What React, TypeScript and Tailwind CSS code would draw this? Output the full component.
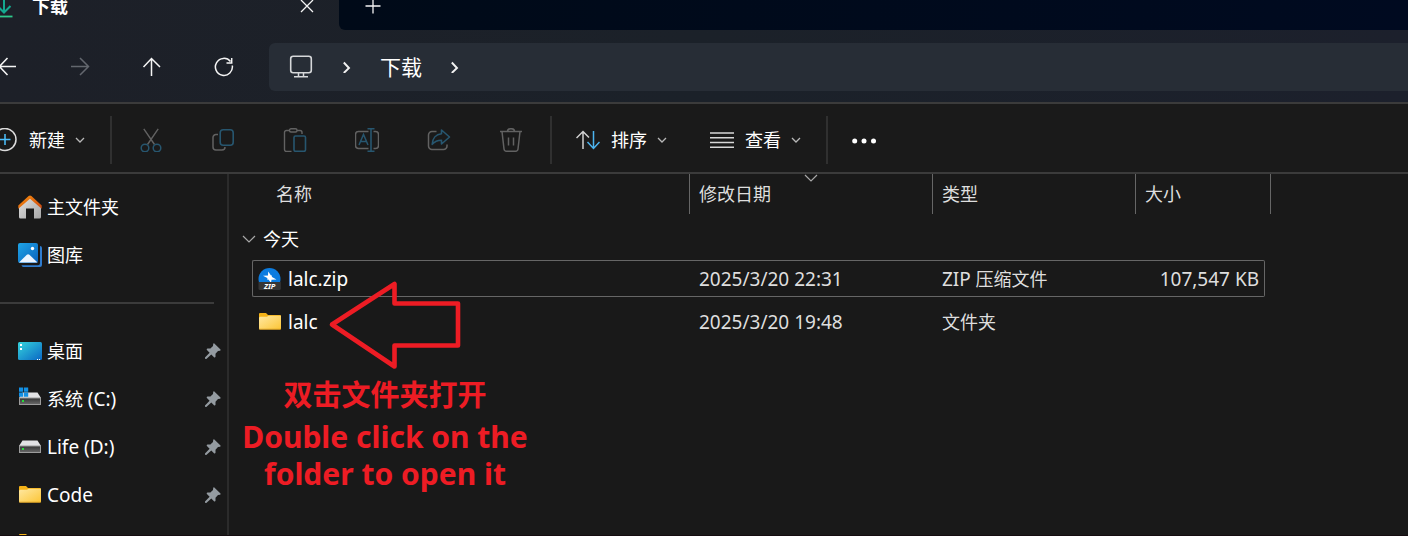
import type { ReactNode } from "react";

const FONT = "font-['Noto_Sans','Noto_Sans_CJK_SC',sans-serif]";

function Svg({ children, className = "size-6", box = "0 0 24 24" }: { children: ReactNode; className?: string; box?: string }) {
  return (
    <svg viewBox={box} fill="none" aria-hidden="true" className={`shrink-0 ${className}`}>
      {children}
    </svg>
  );
}

/* ---------- icons ---------- */

const DownloadIcon = () => (
  <Svg>
    <path d="M12 1V18.500M5.500 12L12 18.500L18.500 12" stroke="#14a98f" strokeWidth="2" />
    <path d="M3.500 22.500H20.500" stroke="#2fc98c" strokeWidth="1.800" />
  </Svg>
);

const SmallChevron = () => (
  <Svg className="size-3" box="0 0 12 12">
    <path d="M2 4L6 8L10 4" stroke="#b8b8b8" strokeWidth="1.300" />
  </Svg>
);

const WideChevron = () => (
  <Svg className="h-2 w-3.5" box="0 0 14 8">
    <path d="M1 1L7 7L13 1" stroke="#a8a8a8" strokeWidth="1.200" />
  </Svg>
);

const CrumbChevron = () => (
  <Svg className="size-3" box="0 0 12 12">
    <path d="M2.800 1.500L8 7L2.800 12" stroke="#f2f2f2" strokeWidth="1.900" />
  </Svg>
);

const MonitorIcon = () => (
  <Svg>
    <rect x="1.700" y="1.200" width="20.600" height="16.600" rx="2.500" stroke="#d6d8da" strokeWidth="1.600" />
    <path d="M9.500 18V21M14.500 18V21M5 21.700H19" stroke="#d6d8da" strokeWidth="1.500" />
  </Svg>
);

const GREY = "#626262";
const BLUE = "#27566f";

const CutIcon = () => (
  <Svg>
    <path d="M4.800 0.800L15.500 16.500M19.200 0.800L8.500 16.500" stroke={GREY} strokeWidth="1.400" />
    <circle cx="6" cy="20" r="3.800" stroke={BLUE} strokeWidth="1.500" />
    <circle cx="18" cy="20" r="3.800" stroke={BLUE} strokeWidth="1.500" />
  </Svg>
);

const CopyIcon = () => (
  <Svg>
    <path d="M7 6.500H5a3 3 0 0 0-3 3V19a3 3 0 0 0 3 3H11a3 3 0 0 0 3-3" stroke={GREY} strokeWidth="1.500" />
    <rect x="9.200" y="1.800" width="13" height="15.500" rx="3" stroke={BLUE} strokeWidth="1.600" />
  </Svg>
);

const PasteIcon = () => (
  <Svg>
    <path d="M7 2.500H3.500a2 2 0 0 0-2 2V21.500a2 2 0 0 0 2 2H8.500M14 2.500H17a2 2 0 0 1 2 2V6" stroke={GREY} strokeWidth="1.400" />
    <rect x="6.500" y="0.800" width="7.500" height="3.200" rx="1.500" stroke={GREY} strokeWidth="1.400" />
    <rect x="11" y="8" width="11.500" height="15.300" rx="1.500" stroke={BLUE} strokeWidth="1.600" />
  </Svg>
);

const RenameIcon = () => (
  <Svg>
    <path d="M13.500 3.500H3.500a3 3 0 0 0-3 3V17.500a3 3 0 0 0 3 3H13.500M18.500 3.500H20.500a3 3 0 0 1 3 3V17.500a3 3 0 0 1-3 3H18.500" stroke={GREY} strokeWidth="1.500" />
    <path d="M12.500 0.800H19.500M12.500 23.200H19.500M16 1V23" stroke={BLUE} strokeWidth="1.600" />
    <path d="M4 17L8.500 6.500L13 17M5.500 13.500H11.500" stroke={BLUE} strokeWidth="1.500" />
  </Svg>
);

const ShareIcon = () => (
  <Svg>
    <path d="M9.500 3.500H5a3.500 3.500 0 0 0-3.500 3.500V18a3.500 3.500 0 0 0 3.500 3.500H16.500a3.500 3.500 0 0 0 3.500-3.500V16.500" stroke={GREY} strokeWidth="1.500" />
    <path d="M14.500 2L22.500 9L14.500 16V12.200C10.500 12.200 7.500 13.500 5.200 16.300C5.500 10.500 9 6.300 14.500 5.800Z" stroke={BLUE} strokeWidth="1.600" strokeLinejoin="round" />
  </Svg>
);

const TrashIcon = () => (
  <Svg>
    <path d="M1 3.500H23M8.500 3.500a3.500 2.800 0 0 1 7 0M3 3.500L5 21a2.500 2.500 0 0 0 2.400 2.200H16.600A2.500 2.500 0 0 0 19 21L21 3.500M9.500 9.500V17.500M14.500 9.500V17.500" stroke={GREY} strokeWidth="1.500" />
  </Svg>
);

const HomeIcon = () => (
  <Svg>
    <defs>
      <linearGradient id="wall" x1="0" y1="0" x2="1" y2="1">
        <stop offset="0" stopColor="#e3e3e3" />
        <stop offset="1" stopColor="#a6a6a6" />
      </linearGradient>
      <linearGradient id="roof" x1="0" y1="0" x2="1" y2="1">
        <stop offset="0" stopColor="#f78f0c" />
        <stop offset="1" stopColor="#cf4a14" />
      </linearGradient>
    </defs>
    <path d="M1 11L12 1.500L23 11V22a1.500 1.500 0 0 1-1.500 1.500H16V13.500H8V23.500H2.500A1.500 1.500 0 0 1 1 22Z" fill="url(#wall)" />
    <path d="M0.300 10.500L10.600 1.100a2 2 0 0 1 2.800 0L23.700 10.500V13.800L12 3.800L0.300 13.800Z" fill="url(#roof)" />
  </Svg>
);

const GalleryIcon = () => (
  <Svg>
    <defs>
      <linearGradient id="photo" x1="0" y1="0" x2="1" y2="1">
        <stop offset="0" stopColor="#1ea4e6" />
        <stop offset="1" stopColor="#0a62bd" />
      </linearGradient>
    </defs>
    <path d="M22 3a2 2 0 0 1 2 2V22a2 2 0 0 1-2 2H5.500a2 2 0 0 1-2-1.800H20a2 2 0 0 0 2-2Z" fill="#2f7ccf" />
    <rect width="20" height="20" rx="2" fill="url(#photo)" />
    <path d="M1 19.500L8.800 11.700a2 2 0 0 1 2.600 0L19.500 19.500Z" fill="#edf5ff" />
    <circle cx="14.500" cy="5.500" r="1.700" fill="#fff" />
  </Svg>
);

const DesktopIcon = () => (
  <Svg>
    <defs>
      <linearGradient id="desk" x1="0" y1="0" x2="1" y2="1">
        <stop offset="0" stopColor="#35d3dc" />
        <stop offset="1" stopColor="#0a67c4" />
      </linearGradient>
    </defs>
    <rect y="3" width="24" height="18" rx="1.500" fill="url(#desk)" />
    <path d="M2 5H4V7H2ZM2 9H4V11H2ZM19 20H20V21H19ZM21 20H22V21H21Z" fill="#fff" />
  </Svg>
);

const DriveIcon = ({ system = false }: { system?: boolean }) => (
  <Svg>
    <defs>
      <linearGradient id="drive" x1="0" y1="0" x2="0" y2="1">
        <stop offset="0" stopColor="#333" />
        <stop offset="1" stopColor="#6b6b6b" />
      </linearGradient>
    </defs>
    <path d="M4.500 5.500H19.500L23 11H1Z" fill="#e2e2e4" />
    <rect x="1.500" y="11" width="21" height="6.500" fill="url(#drive)" stroke="#9c9c9c" />
    <rect x="4" y="13" width="2" height="2" fill="#27dc3a" />
    {system && <path d="M1 0.500H5.200V4.700H1ZM6 0.500H10.200V4.700H6ZM1 5.500H5.200V9.700H1ZM6 5.500H10.200V9.700H6Z" fill="#1390e4" />}
  </Svg>
);

const FolderIcon = () => (
  <Svg>
    <defs>
      <linearGradient id="folder" x1="0" y1="0" x2="1" y2="1">
        <stop offset="0" stopColor="#ffe8a2" />
        <stop offset="1" stopColor="#fcc535" />
      </linearGradient>
    </defs>
    <path d="M1 4a1 1 0 0 1 1-1H8L10 5H22a1 1 0 0 1 1 1V9H1Z" fill="#f4b217" />
    <path d="M1 8a1.500 1.500 0 0 1 1.500-1.200H9L10.500 5.800H23V18.500a1 1 0 0 1-1 1H2a1 1 0 0 1-1-1Z" fill="url(#folder)" />
    <path d="M1.300 19.200H22.700" stroke="#dfa01c" strokeWidth="0.800" />
  </Svg>
);

const ZipIcon = () => (
  <Svg>
    <circle cx="11.500" cy="12" r="11" fill="#0b7ce0" />
    <path d="M10.200 4.500L13 8.500L13.500 8L14 10L18.500 12.500L13.500 12.700L13 16L10.500 12.500L9.500 13L9.300 11L5 8.800L10 8.600Z" fill="#fff" />
    <path d="M0.500 15H22.800V21.500a1.500 1.500 0 0 1-1.500 1.500H2A1.500 1.500 0 0 1 0.500 21.500Z" fill="#363636" />
    <text x="11.700" y="21.700" textAnchor="middle" fontSize="7.500" fontStyle="italic" fontWeight="700" fill="#fff">ZIP</text>
  </Svg>
);

const PinIcon = () => (
  <Svg className="size-4" box="0 0 16 16">
    <path d="M9.300 0.500L15.500 6.500C15.800 7 15.500 7.600 15 7.700L13 8L10.500 10.700V13.800C10.300 14.500 9.500 14.700 9 14.200L6.300 11.500L1.300 16L0 15.800V14.600L4.600 9.800L1.900 7C1.500 6.400 1.800 5.700 2.500 5.600H5.400L8 3L8.200 1C8.300 0.400 8.900 0.200 9.300 0.500Z" fill="#949ba1" />
  </Svg>
);

/* ---------- pieces ---------- */

function NavButton({ label, disabled, children }: { label: string; disabled?: boolean; children: ReactNode }) {
  return (
    <button type="button" aria-label={label} disabled={disabled} className="flex h-12 w-[72px] shrink-0 items-center justify-center">
      <Svg className="size-5" box="0 0 20 20">
        <g stroke={disabled ? "#63676e" : "#f5f5f5"} strokeWidth="1.500">{children}</g>
      </Svg>
    </button>
  );
}

function Divider() {
  return <div className="h-12 w-0.5 shrink-0 bg-[#303030]" />;
}

function ToolButton({ label, children }: { label: string; children: ReactNode }) {
  return (
    <button type="button" aria-label={label} disabled className="flex h-12 w-[72px] items-center justify-center">
      {children}
    </button>
  );
}

function Latin({ children }: { children: ReactNode }) {
  return <span className="text-[19px]">{children}</span>;
}

function SideItem({ icon, pinned, children }: { icon: ReactNode; pinned?: boolean; children: ReactNode }) {
  return (
    <li>
      <a href="#" className="flex h-12 items-center gap-[5px] pr-1.5 pl-[18px] text-[18px] whitespace-nowrap text-white">
        {icon}
        <span className="flex-1">{children}</span>
        {pinned && <PinIcon />}
      </a>
    </li>
  );
}

type Entry = { name: string; icon: ReactNode; date: string; type: ReactNode; size: string; focused: boolean };

const entries: Entry[] = [
  { name: "lalc.zip", icon: <ZipIcon />, date: "2025/3/20 22:31", type: <><Latin>ZIP</Latin> 压缩文件</>, size: "107,547 KB", focused: true },
  { name: "lalc", icon: <FolderIcon />, date: "2025/3/20 19:48", type: "文件夹", size: "", focused: false },
];

function EntryRow({ entry }: { entry: Entry }) {
  const edge = entry.focused ? "border-[#666]" : "border-transparent";
  return (
    <tr className="h-[37px] text-[#dedede]">
      <td />
      <td className={`rounded-l-xs border-y border-l p-0 pl-[5px] ${edge}`}>
        <div className="flex items-center gap-1.5 text-[19px] leading-6 text-white">
          {entry.icon}
          {entry.name}
        </div>
      </td>
      <td className={`border-y p-0 pl-[9px] text-[19px] leading-6 ${edge}`}>{entry.date}</td>
      <td className={`border-y p-0 pl-[9px] text-[18px] leading-6 ${edge}`}>{entry.type}</td>
      <td className={`rounded-r-xs border-y border-r p-0 pr-[5px] text-right text-[19px] leading-6 ${edge}`}>{entry.size}</td>
      <td />
    </tr>
  );
}

function Note() {
  return (
    <div className="pointer-events-none absolute top-[106px] left-3 w-72 text-center font-bold text-[#ed1c24]">
      <svg viewBox="0 0 140 92" fill="none" aria-hidden="true" className="ml-[86px] h-[92px] w-[140px]">
        <path d="M5 44.500L67.500 4V23.500H131V65.500H67.500V86.500Z" stroke="#ed1c24" strokeWidth="4.600" strokeLinejoin="round" />
      </svg>
      <p className="text-[29px] leading-[46px]">双击文件夹打开</p>
      <p className="text-[30px] leading-[37px] whitespace-nowrap">
        Double click on the
        <br />
        folder to open it
      </p>
    </div>
  );
}

export default function App() {
  return (
    <div className={`flex h-screen flex-col overflow-hidden border-b border-[#150c10] bg-[#191919] text-white ${FONT}`}>
      <header className="shrink-0 border-b-2 border-[#3b3b3b] bg-linear-to-r from-[#1d2028] via-[#1b2129] to-[#1c202c]">
        <div className="flex h-[30px]">
          <div className="-mt-[18px] -ml-2 flex h-12 w-[347px] shrink-0 items-center pr-6">
            <DownloadIcon />
            <span className="ml-4 flex-1 text-[18px] font-bold">下载</span>
            <button type="button" aria-label="关闭标签页" className="flex size-4 items-center justify-center">
              <Svg className="size-4" box="0 0 16 16">
                <path d="M2 2L14 14M14 2L2 14" stroke="#f5f5f5" strokeWidth="1.300" />
              </Svg>
            </button>
          </div>
          <div className="flex-1 rounded-bl-md bg-linear-to-r from-[#000a18] to-[#000a20]">
            <button type="button" aria-label="新标签页" className="-mt-[18px] ml-[26px] flex h-12 items-center">
              <Svg className="size-4" box="0 0 16 16">
                <path d="M8 0.500V15.500M0.500 8H15.500" stroke="#f5f5f5" strokeWidth="1.300" />
              </Svg>
            </button>
          </div>
        </div>
        <nav className="-ml-7 flex items-center pt-[13px] pb-[11px]" aria-label="导航">
          <NavButton label="后退"><path d="M18 9.500H1.500M9.500 1L1.500 9.500L9.500 18" /></NavButton>
          <NavButton label="前进" disabled><path d="M1 9.500H18.500M10 1L18.500 9.500L10 18" /></NavButton>
          <NavButton label="上移"><path d="M9.500 19V1.500M1.500 10L9.500 1.500L18 10" /></NavButton>
          <NavButton label="刷新"><path d="M16.500 4.500A8.500 8.500 0 1 0 18.300 8.500M17.700 1V6H12.500" /></NavButton>
          <div className="ml-[9px] flex h-12 flex-1 items-center rounded-l-md bg-[#272d36] pl-5 text-[21px]">
            <button type="button" aria-label="此电脑"><MonitorIcon /></button>
            <span className="ml-7"><CrumbChevron /></span>
            <button type="button" className="mx-[27px] pt-0.5">下载</button>
            <CrumbChevron />
          </div>
        </nav>
      </header>

      <div role="toolbar" aria-label="命令栏" className="flex h-[70px] shrink-0 items-center border-b-2 border-[#3b3b3b] bg-[#1a1a1a] pt-1 text-[18px] whitespace-nowrap">
        <button type="button" className="-ml-[7px] flex items-center pr-6">
          <Svg>
            <circle cx="12" cy="11.500" r="11" stroke="#dcdcdc" strokeWidth="1.500" />
            <path d="M12 6V17M6.500 11.500H17.500" stroke="#4cc2ff" strokeWidth="1.500" />
          </Svg>
          <span className="mr-[9px] ml-3">新建</span>
          <SmallChevron />
        </button>
        <Divider />
        <div className="mx-[3px] flex">
          <ToolButton label="剪切"><CutIcon /></ToolButton>
          <ToolButton label="复制"><CopyIcon /></ToolButton>
          <ToolButton label="粘贴"><PasteIcon /></ToolButton>
          <ToolButton label="重命名"><RenameIcon /></ToolButton>
          <ToolButton label="共享"><ShareIcon /></ToolButton>
          <ToolButton label="删除"><TrashIcon /></ToolButton>
        </div>
        <Divider />
        <button type="button" className="flex items-center pl-6">
          <Svg>
            <path d="M7 21V3.500M0.500 10L7 3.500L13 9.500" stroke="#d0d0d0" strokeWidth="1.500" />
            <path d="M17.500 3V20.500M11.500 14L17.500 20.500L23.500 14" stroke="#4cb4ef" strokeWidth="1.500" />
          </Svg>
          <span className="mr-[9px] ml-[11px]">排序</span>
          <SmallChevron />
        </button>
        <button type="button" className="flex items-center pr-6 pl-[42px]">
          <Svg>
            <path d="M0 5H24M0 9.700H24M0 14.500H24M0 19.300H24" stroke="#d8d8d8" strokeWidth="1.400" />
          </Svg>
          <span className="mr-[9px] ml-[11px]">查看</span>
          <SmallChevron />
        </button>
        <Divider />
        <button type="button" aria-label="更多" className="ml-6">
          <Svg>
            <g fill="#fff">
              <circle cx="2.700" cy="13" r="2.500" />
              <circle cx="12" cy="13" r="2.500" />
              <circle cx="21.500" cy="13" r="2.500" />
            </g>
          </Svg>
        </button>
      </div>

      <div className="flex min-h-0 flex-1">
        <aside className="w-[229px] shrink-0 overflow-hidden border-r-2 border-[#2b2b2b] pt-[9px]">
          <ul>
            <SideItem icon={<HomeIcon />}>主文件夹</SideItem>
            <SideItem icon={<GalleryIcon />}>图库</SideItem>
          </ul>
          <hr className="my-[23px] mr-[13px] border-t-2 border-[#3b3b3b]" />
          <ul>
            <SideItem icon={<DesktopIcon />} pinned>桌面</SideItem>
            <SideItem icon={<DriveIcon system />} pinned>系统 <Latin>(C:)</Latin></SideItem>
            <SideItem icon={<DriveIcon />} pinned><Latin>Life (D:)</Latin></SideItem>
            <SideItem icon={<FolderIcon />} pinned><Latin>Code</Latin></SideItem>
            <SideItem icon={<FolderIcon />} pinned>{""}</SideItem>
          </ul>
        </aside>

        <main className="relative min-w-0 flex-1 overflow-hidden">
          <table className="w-[1042px] table-fixed border-separate border-spacing-0 text-left">
            <colgroup>
              <col className="w-[23px]" />
              <col className="w-[438px]" />
              <col className="w-[243px]" />
              <col className="w-[203px]" />
              <col className="w-[129px]" />
              <col className="w-[6px]" />
            </colgroup>
            <thead>
              <tr className="h-10 text-[18px] leading-6 text-[#dedede]">
                <th colSpan={2} className="border-r border-[#666] p-0 pl-[47px] font-normal">名称</th>
                <th className="relative border-r border-[#666] p-0 pl-[9px] font-normal">
                  修改日期
                  <span className="absolute inset-x-0 top-0 flex justify-center"><WideChevron /></span>
                </th>
                <th className="border-r border-[#666] p-0 pl-[9px] font-normal">类型</th>
                <th colSpan={2} className="border-r border-[#666] p-0 pl-[9px] font-normal">大小</th>
              </tr>
            </thead>
            <tbody>
              <tr className="h-[46px]">
                <th colSpan={6} className="p-0 pt-1 pl-[13px] font-normal">
                  <button type="button" className="flex items-center gap-[7px] text-[18px] leading-6">
                    <WideChevron />
                    今天
                  </button>
                </th>
              </tr>
              <EntryRow entry={entries[0]} />
              <tr className="h-1.5" aria-hidden="true"><td colSpan={6} className="p-0" /></tr>
              <EntryRow entry={entries[1]} />
            </tbody>
          </table>
          <Note />
        </main>
      </div>
    </div>
  );
}
